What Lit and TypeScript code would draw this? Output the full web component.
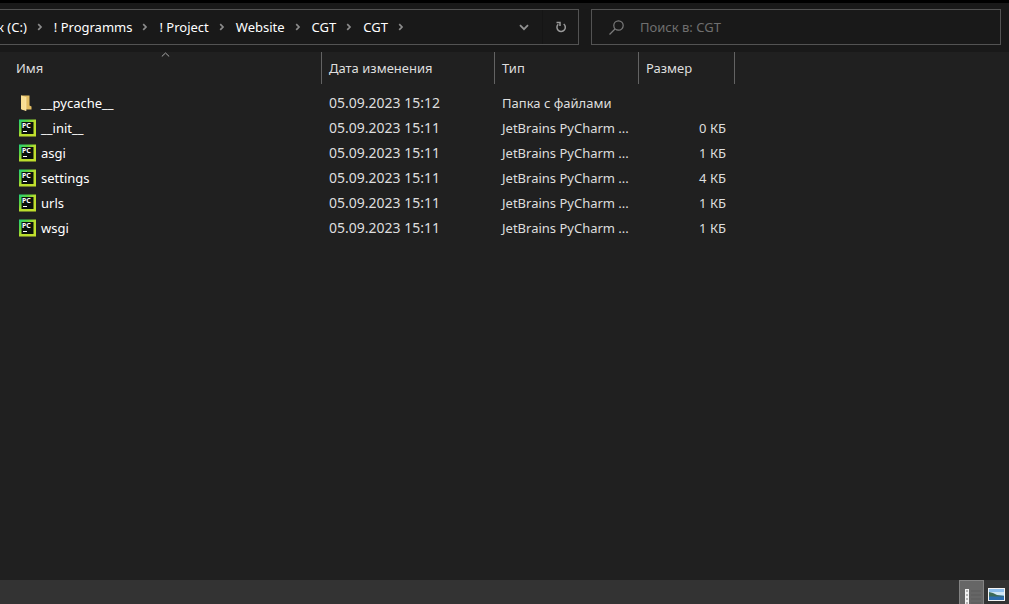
import { LitElement, html, css, nothing } from "lit";
import { customElement, state } from "lit/decorators.js";

interface Entry {
  name: string;
  date: string;
  type: string;
  size: string;
  folder?: boolean;
}

const PY = "JetBrains PyCharm ...";
const ENTRIES: Entry[] = [
  { name: "__pycache__", date: "05.09.2023 15:12", type: "Папка с файлами", size: "", folder: true },
  { name: "__init__", date: "05.09.2023 15:11", type: PY, size: "0 КБ" },
  { name: "asgi", date: "05.09.2023 15:11", type: PY, size: "1 КБ" },
  { name: "settings", date: "05.09.2023 15:11", type: PY, size: "4 КБ" },
  { name: "urls", date: "05.09.2023 15:11", type: PY, size: "1 КБ" },
  { name: "wsgi", date: "05.09.2023 15:11", type: PY, size: "1 КБ" },
];

const CRUMBS = ["к (C:)", "! Programms", "! Project", "Website", "CGT", "CGT"];

const chevron = html`<svg class="chevron" width="6" height="8" viewBox="0 0 6 8" aria-hidden="true">
  <path d="M1.2 1.200 4 4 1.200 6.800" fill="none" stroke="#8c8c8c" stroke-width="1.700" />
</svg>`;

const folderIcon = html`<svg width="18" height="18" viewBox="0 0 18 18" aria-hidden="true">
  <path d="M3 1.500H11.500V11.500L13.500 12.500V15.500H4z" fill="#e3bd62" />
  <path d="M3 1.500 8 3v14L3 15.200z" fill="#f9de92" />
  <path d="M8 3v14" stroke="#fbeab5" stroke-width=".6" />
</svg>`;

const pythonIcon = html`<svg width="18" height="18" viewBox="0 0 18 18" aria-hidden="true">
  <defs>
    <linearGradient id="g" x1="0" y1="0" x2="1" y2="1">
      <stop offset="0" stop-color="#1fd07c" />
      <stop offset=".3" stop-color="#5fd440" />
      <stop offset=".5" stop-color="#b9dd2e" />
      <stop offset="1" stop-color="#c3e02c" />
    </linearGradient>
  </defs>
  <rect x="1" y="0.500" width="17" height="17" fill="url(#g)" />
  <rect x="3.500" y="3" width="12" height="12" fill="#0b120d" />
  <text class="pc" x="4" y="9">PC</text>
  <rect x="5" y="12" width="4" height="1" fill="#fff" />
</svg>`;

@customElement("app-root")
export class AppRoot extends LitElement {
  @state() private query = "";

  static styles = css`
    :host {
      display: flex;
      flex-direction: column;
      height: 100vh;
      overflow: hidden;
      background: #202020;
      color: #dedede;
      font: 13px/18px "Noto Sans", "Open Sans", sans-serif;
    }
    * { box-sizing: border-box; }
    button, input {
      font: inherit;
      color: inherit;
      background: none;
      border: 0;
      padding: 0;
      margin: 0;
      outline: none;
    }
    svg { display: block; flex: none; }
    .toolbar {
      display: grid;
      grid-template-columns: minmax(0, 579fr) minmax(0, 410fr);
      gap: 12px;
      padding: 6px 8px 7px 0;
      border-top: 3px solid #000;
      background: #191919;
    }
    .address {
      display: flex;
      height: 36px;
      border: 1px solid #535353;
      border-left: 0;
    }
    .crumbs {
      flex: 1;
      min-width: 0;
      display: flex;
      align-items: center;
      overflow: hidden;
      margin: 0;
      padding: 0;
      list-style: none;
      color: #fff;
    }
    .crumbs li { display: flex; align-items: center; flex: none; }
    .crumbs li:first-child { margin-left: -3px; }
    .chevron { margin: 0 11px 0 10px; }
    .tool {
      width: 36px;
      display: flex;
      align-items: center;
      justify-content: center;
    }
    .refresh { border-left: 1px solid #151515; }
    .search {
      display: flex;
      align-items: center;
      gap: 15px;
      padding: 0 16px;
      border: 1px solid #535353;
    }
    .search input { flex: 1; min-width: 0; color: #fff; }
    .search input::placeholder { color: #6f6f6f; opacity: 1; }
    main { flex: 1; min-height: 0; overflow: hidden; }
    table { border-collapse: collapse; table-layout: fixed; width: 735px; }
    .name { width: 322px; }
    .date { width: 173px; }
    .type { width: 144px; }
    .size { width: 96px; }
    th { padding: 0 0 6px; font-weight: 400; text-align: left; }
    .sort {
      display: flex;
      width: 100%;
      height: 32px;
      align-items: center;
      padding: 0 7px;
      border-right: 1px solid #636363;
      text-align: left;
      position: relative;
    }
    .name .sort { padding-left: 16px; }
    .arrow { position: absolute; left: 50%; top: 0; }
    td {
      height: 25px;
      padding: 0 9px 0 7px;
      white-space: nowrap;
      overflow: hidden;
    }
    td:first-child { padding-left: 18px; color: #fff; }
    td:nth-child(2) { font-size: 14px; }
    td:last-child { text-align: right; }
    .file { display: flex; align-items: center; gap: 5px; }
    .pc { font: 700 7px "Noto Sans", sans-serif; fill: #fff; }
    footer {
      display: flex;
      justify-content: flex-end;
      height: 24px;
      background: #333;
    }
    .view { width: 25px; height: 24px; overflow: hidden; }
    .view.active { background: #666; border: 1px solid #838383; border-bottom: 0; }
  `;

  private header(cls: string, label: string, sorted = false) {
    return html`<th class=${cls} scope="col">
      <button class="sort">
        ${label}
        ${sorted
          ? html`<svg class="arrow" width="9" height="5" viewBox="0 0 9 5" aria-hidden="true">
              <path d="M.8 4.500 4.500 1 8.200 4.500" fill="none" stroke="#a8a8a8" />
            </svg>`
          : nothing}
      </button>
    </th>`;
  }

  render() {
    return html`
      <header class="toolbar">
        <nav class="address" aria-label="Адрес">
          <ol class="crumbs">
            ${CRUMBS.map((c) => html`<li><button>${c}</button>${chevron}</li>`)}
          </ol>
          <button class="tool" aria-label="Предыдущие расположения">
            <svg width="10" height="7" viewBox="0 0 10 7"><path d="M1 1.200 5 5.200 9 1.200" fill="none" stroke="#929292" stroke-width="1.800" /></svg>
          </button>
          <button class="tool refresh" aria-label="Обновить">
            <svg width="12" height="12" viewBox="0 0 12 12">
              <path d="M8.700 3A4.200 4.200 0 1 1 3.200 3.300M1.500 1.500H5V5" fill="none" stroke="#9a9a9a" stroke-width="1.500" />
            </svg>
          </button>
        </nav>
        <label class="search">
          <svg width="17" height="17" viewBox="0 0 17 17" aria-hidden="true">
            <circle cx="10.500" cy="6.500" r="4.700" fill="none" stroke="#7b7b7b" stroke-width="1.200" />
            <path d="M7 10 1.500 15.500" stroke="#7b7b7b" stroke-width="1.200" />
          </svg>
          <input type="text" placeholder="Поиск в: CGT" aria-label="Поиск в: CGT"
            .value=${this.query}
            @input=${(e: Event) => (this.query = (e.target as HTMLInputElement).value)} />
        </label>
      </header>
      <main>
        <table>
          <thead>
            <tr>
              ${this.header("name", "Имя", true)} ${this.header("date", "Дата изменения")}
              ${this.header("type", "Тип")} ${this.header("size", "Размер")}
            </tr>
          </thead>
          <tbody>
            ${ENTRIES.map(
              (f) => html`<tr>
                <td><div class="file">${f.folder ? folderIcon : pythonIcon}<span>${f.name}</span></div></td>
                <td>${f.date}</td>
                <td>${f.type}</td>
                <td>${f.size}</td>
              </tr>`
            )}
          </tbody>
        </table>
      </main>
      <footer>
        <button class="view active" aria-label="Таблица">
          <svg width="23" height="23" viewBox="0 0 23 23">
            <path d="M11 10h10M11 14h10M11 18h10M11 22h10" stroke="#5a5a5a" />
            <rect x="5" y="8" width="4" height="15" fill="#f2f2f2" />
            <path d="M6.500 10h1M6.500 14h1M6.500 18h1M6.500 22h1" stroke="#555" stroke-width="1.500" />
          </svg>
        </button>
        <button class="view" aria-label="Крупные значки">
          <svg width="25" height="24" viewBox="0 0 25 24">
            <rect x="4" y="8" width="17" height="13" fill="#f4f4f4" />
            <rect x="5" y="9" width="15" height="11" fill="#8fc0ee" />
            <path d="M5 12h15v3H5z" fill="#cfe6f5" />
            <path d="M5 12l4 1 4 2 7 1v1H5z" fill="#3c6a58" />
            <path d="M5 16.500h15V20H5z" fill="#2b6cae" />
          </svg>
        </button>
      </footer>
    `;
  }
}
